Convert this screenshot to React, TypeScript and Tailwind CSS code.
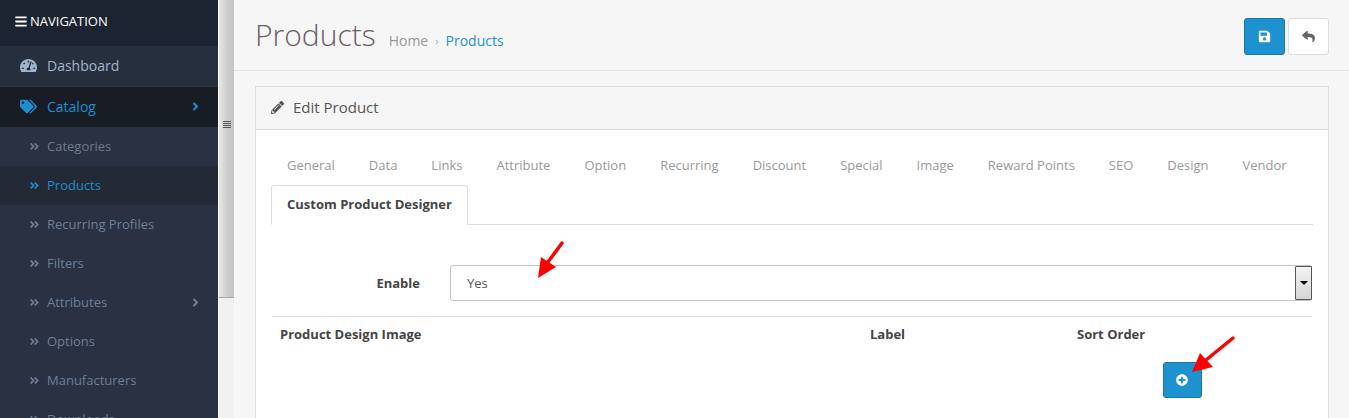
import { FaAngleDoubleRight, FaAngleRight, FaBars, FaPencilAlt, FaPlusCircle, FaSave, FaReply, FaTachometerAlt, FaTags } from 'react-icons/fa';

const subItems = [
  { label: 'Categories', bg: 'bg-[#2a3142]', color: 'text-[#6d7a8c]' },
  { label: 'Products', bg: 'bg-[#232a36]', color: 'text-[#1c8dcf]' },
  { label: 'Recurring Profiles', bg: 'bg-[#2a3142]', color: 'text-[#6d7f99]' },
  { label: 'Filters', bg: 'bg-[#2a3142]', color: 'text-[#6d7f99]' },
  { label: 'Attributes', bg: 'bg-[#2a3142]', color: 'text-[#6d7f99]', arrow: true },
  { label: 'Options', bg: 'bg-[#2a3142]', color: 'text-[#6d7f99]' },
  { label: 'Manufacturers', bg: 'bg-[#2a3142]', color: 'text-[#6d7f99]' },
  { label: 'Downloads', bg: 'bg-[#2a3142]', color: 'text-[#6d7f99]' },
];

const tabs = ['General', 'Data', 'Links', 'Attribute', 'Option', 'Recurring', 'Discount', 'Special', 'Image', 'Reward Points', 'SEO', 'Design', 'Vendor'];

function Sidebar() {
  return (
    <div className="w-[218px] h-[418px] shrink-0 overflow-hidden bg-[#2a3142]">
      <div className="h-[46px] bg-[#1c2331] flex items-center pl-[15px] pb-[3px] text-white text-[13px] gap-[3px]">
        <FaBars className="w-[12px] h-[13px]" />
        NAVIGATION
      </div>
      <div className="h-[41px] bg-[#262f3d] border-b border-[#2f3846] flex items-center pl-[20px] pb-[2px] text-[14px] text-[#a0b5cc]">
        <FaTachometerAlt className="w-[17px] h-[17px] mr-[10px]" />
        Dashboard
      </div>
      <div className="h-[40px] bg-[#181c25] flex items-center pl-[20px] pr-[16px] pb-[2px] text-[14px] text-[#1c8dcf]">
        <FaTags className="w-[17px] h-[17px] mr-[10px]" />
        <span className="flex-1">Catalog</span>
        <FaAngleRight className="w-[13px] h-[13px]" />
      </div>
      {subItems.map((item) => (
        <div key={item.label} className={`h-[39px] ${item.bg} ${item.color} flex items-center pl-[29px] pr-[16px] text-[13px]`}>
          <FaAngleDoubleRight className="w-[11px] h-[11px] mr-[7px]" />
          <span className="flex-1">{item.label}</span>
          {item.arrow && <FaAngleRight className="w-[13px] h-[13px]" />}
        </div>
      ))}
    </div>
  );
}

function Scrollbar() {
  return (
    <div className="w-[16px] h-[418px] shrink-0 border-l border-white bg-[#f0f0f0]">
      <div className="h-[298px] w-[15px] bg-gradient-to-r from-[#e6e6e6] via-[#d0d0d0] to-[#c4c4c4] border-b border-[#a8a8a8] flex items-center justify-center">
        <div className="flex flex-col gap-[1px] mt-[-48px]">
          <div className="w-[8px] h-[1px] bg-[#555]" />
          <div className="w-[8px] h-[1px] bg-[#555]" />
          <div className="w-[8px] h-[1px] bg-[#555]" />
          <div className="w-[8px] h-[1px] bg-[#555]" />
        </div>
      </div>
    </div>
  );
}

export default function App() {
  return (
    <div className="relative flex h-[418px] w-[1349px] overflow-hidden bg-[#f6f6f6] font-['Open_Sans',sans-serif]">
      <Sidebar />
      <Scrollbar />
      <div className="flex-1 min-w-0">
        <div className="h-[71px] border-b border-[#e3e3e3] flex pl-[21px] pr-[20px]">
          <h1 className="text-[30px] font-light text-[#6a5e66] leading-[40px] mt-[15px]">Products</h1>
          <div className="ml-[13px] mt-[31px] text-[14px] leading-[20px] flex text-[#999]">
            <span>Home</span>
            <span className="mx-[7px] text-[11px] text-[#aaa]">›</span>
            <span className="text-[#1e91cf]">Products</span>
          </div>
          <div className="ml-auto mt-[18px] flex gap-[3px] h-[37px]">
            <div className="w-[41px] bg-[#1e91cf] border border-[#1978ab] rounded-[3px] flex items-center justify-center text-white">
              <FaSave className="w-[13px] h-[13px]" />
            </div>
            <div className="w-[41px] bg-white border border-[#ddd] rounded-[3px] flex items-center justify-center text-[#666]">
              <FaReply className="w-[13px] h-[13px]" />
            </div>
          </div>
        </div>
        <div className="mt-[15px] ml-[21px] mr-[20px] border border-[#ddd] border-b-0 h-[340px] bg-white">
          <div className="h-[43px] bg-[#f5f5f5] border-b border-[#ddd] flex items-center pl-[15px] pb-[2px] text-[15px] text-[#555]">
            <FaPencilAlt className="w-[13px] h-[13px] mr-[9px]" />
            Edit Product
          </div>
          <div className="px-[15px]">
            <div className="border-b border-[#ddd] h-[95px] pt-[16px]">
              <div className="flex h-[39px] items-center text-[13px] text-[#999]">
                {tabs.map((t) => (
                  <span key={t} className="pl-[16px] pr-[18px] whitespace-nowrap">{t}</span>
                ))}
              </div>
              <div className="w-[197px] h-[40px] bg-white border border-[#ddd] border-b-white rounded-t-[3px] flex items-center justify-center text-[13px] font-bold text-[#444]">
                Custom Product Designer
              </div>
            </div>
            <div className="flex items-center mt-[39px] h-[37px] pr-[1px]">
              <label className="w-[149px] pt-[2px] text-right text-[13px] font-bold text-[#444]">Enable</label>
              <div className="ml-[30px] flex-1 h-[36px] border border-[#c4c4c4] rounded-[3px] flex items-center pl-[16px] pt-[2px] text-[13px] text-[#555] relative">
                Yes
                <div className="absolute right-[-1px] top-0 w-[17px] h-[34px] border border-[#555] rounded-[1px] bg-gradient-to-b from-[#f3f3f3] to-[#d6d6d6] flex items-center justify-center">
                  <div className="w-0 h-0 border-l-[4px] border-r-[4px] border-t-[4px] border-l-transparent border-r-transparent border-t-black" />
                </div>
              </div>
            </div>
            <div className="mt-[15px] mx-[1px] border-t border-[#ddd] flex pt-[8px] pl-[8px] text-[13px] font-bold text-[#444] leading-[18px]">
              <span className="w-[590px]">Product Design Image</span>
              <span className="w-[207px]">Label</span>
              <span>Sort Order</span>
            </div>
            <div className="ml-[892px] mt-[19px] w-[39px] h-[36px] bg-[#1e91cf] border border-[#1978ab] rounded-[3px] flex items-center justify-center pr-[1px] text-white">
              <FaPlusCircle className="w-[12px] h-[12px]" />
            </div>
          </div>
        </div>
      </div>
      {/* annotation arrows drawn over the screenshot */}
      <svg className="absolute left-[536px] top-[240px]" width="30" height="40" viewBox="0 0 30 40">
        <path d="M26 3 L12 22" stroke="#ff0000" strokeWidth="3.5" strokeLinecap="round" fill="none" />
        <path d="M2 38 L5 17 L20 27 Z" fill="#ff0000" />
      </svg>
      <svg className="absolute left-[1190px] top-[335px]" width="46" height="40" viewBox="0 0 46 40">
        <path d="M43 3 L16 25" stroke="#ff0000" strokeWidth="3.5" strokeLinecap="round" fill="none" />
        <path d="M2 37 L10 18 L23 32 Z" fill="#ff0000" />
      </svg>
    </div>
  );
}
